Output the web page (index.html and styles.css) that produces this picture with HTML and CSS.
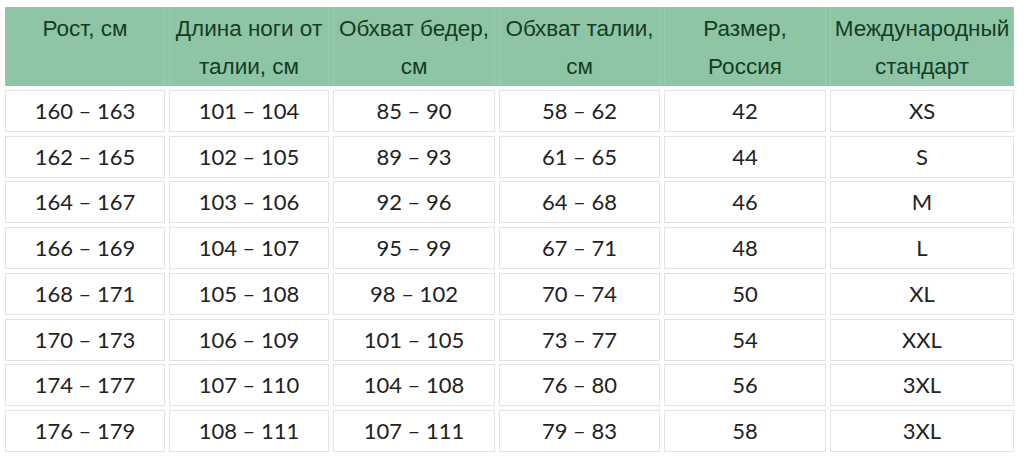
FILE: index.html
```html
<!DOCTYPE html>
<html lang="ru">
<head>
<meta charset="utf-8">
<title>Таблица размеров</title>
<link rel="stylesheet" href="styles.css">
</head>
<body>
<div class="sizes">
  <div class="row head">
    <div class="cell">Рост, см</div>
    <div class="cell">Длина ноги от талии, см</div>
    <div class="cell">Обхват бедер, см</div>
    <div class="cell">Обхват талии, см</div>
    <div class="cell">Размер, Россия</div>
    <div class="cell">Международный стандарт</div>
  </div>
  <div class="row"><div class="cell">160 – 163</div><div class="cell">101 – 104</div><div class="cell">85 – 90</div><div class="cell">58 – 62</div><div class="cell">42</div><div class="cell">XS</div></div>
  <div class="row"><div class="cell">162 – 165</div><div class="cell">102 – 105</div><div class="cell">89 – 93</div><div class="cell">61 – 65</div><div class="cell">44</div><div class="cell">S</div></div>
  <div class="row"><div class="cell">164 – 167</div><div class="cell">103 – 106</div><div class="cell">92 – 96</div><div class="cell">64 – 68</div><div class="cell">46</div><div class="cell">M</div></div>
  <div class="row"><div class="cell">166 – 169</div><div class="cell">104 – 107</div><div class="cell">95 – 99</div><div class="cell">67 – 71</div><div class="cell">48</div><div class="cell">L</div></div>
  <div class="row"><div class="cell">168 – 171</div><div class="cell">105 – 108</div><div class="cell">98 – 102</div><div class="cell">70 – 74</div><div class="cell">50</div><div class="cell">XL</div></div>
  <div class="row"><div class="cell">170 – 173</div><div class="cell">106 – 109</div><div class="cell">101 – 105</div><div class="cell">73 – 77</div><div class="cell">54</div><div class="cell">XXL</div></div>
  <div class="row"><div class="cell">174 – 177</div><div class="cell">107 – 110</div><div class="cell">104 – 108</div><div class="cell">76 – 80</div><div class="cell">56</div><div class="cell">3XL</div></div>
  <div class="row"><div class="cell">176 – 179</div><div class="cell">108 – 111</div><div class="cell">107 – 111</div><div class="cell">79 – 83</div><div class="cell">58</div><div class="cell">3XL</div></div>
</div>
</body>
</html>
```
FILE: styles.css
```css
html, body {
  margin: 0;
  padding: 0;
  background: #ffffff;
}
body {
  padding: 7px 0 0 5px;
}
.sizes {
  display: flex;
  flex-direction: column;
  gap: 3.75px;
  width: 1009px;
}
.row {
  display: grid;
  grid-template-columns: 160px 160px 162px 161px 162px 184px;
  column-gap: 4px;
  height: 42px;
}
.row .cell {
  border: 1px solid #e3e3e3;
  display: flex;
  align-items: center;
  justify-content: center;
  padding-bottom: 1px;
  font-family: Lato, "Noto Sans", sans-serif;
  font-size: 22px;
  color: #222222;
}
.row.head {
  height: 79px;
  background: #8ec5a4;
}
.row.head .cell {
  border: 1px solid #99cbad;
  border-top: none;
  border-bottom: none;
  display: block;
  text-align: center;
  padding: 3px 0 0;
  font-family: "Liberation Sans", Arial, sans-serif;
  font-size: 22.5px;
  line-height: 38px;
  color: #143d24;
}
```
